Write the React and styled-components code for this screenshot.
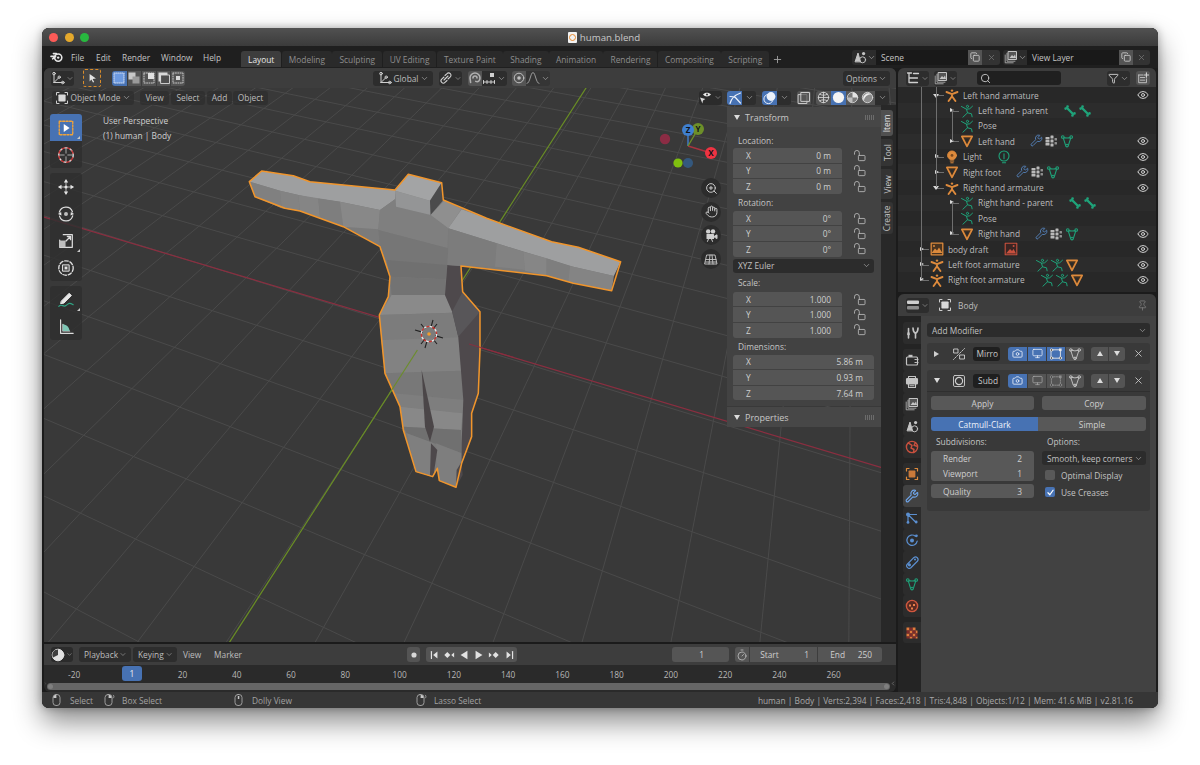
import React from "react";
import styled, { createGlobalStyle } from "styled-components";
import {
  ChevronDown, ChevronLeft, ChevronRight, Eye, X, Funnel, Search, Copy, Hand, ZoomIn, Pin, Plus, Camera,
  Monitor, Timer, Wrench,
} from "lucide-react";

const GlobalStyle = createGlobalStyle`
  html, body { margin: 0; padding: 0; background: #fff; }
  body { font-family: "Open Sans", "Liberation Sans", sans-serif; font-size: 8.35px; color: #c2c2c2; white-space: nowrap; }
  * { box-sizing: border-box; }
`;

const BLUE = "#4772b3";

/* ---------- small drawings ---------- */

const Svg = styled.svg`
  flex: none;
  display: block;
  color: ${(p) => p.$c || "#c8c8c8"};
`;

const Ico = ({ s = 14, c, children, w = 1 }) => (
  <Svg $c={c} width={s} height={s} viewBox="0 0 14 14" fill="none" stroke="currentColor"
    strokeWidth={w} strokeLinecap="round" strokeLinejoin="round">
    {children}
  </Svg>
);

const ORANGE = "#dd8a3c";
const GREEN = "#1fa37a";
const SKY = "#5b8fd0";

const Armature = () => (
  <Ico c={ORANGE} w={1.9}>
    <circle cx="7" cy="2.6" r="1.2" fill="currentColor" stroke="none" />
    <path d="M1.5 4 7 6.2 12.5 4M7 6.2v2M7 8.2 3.6 13M7 8.2l3.4 4.8" />
  </Ico>
);
const Pose = () => (
  <Ico c={GREEN} w={1}>
    <circle cx="7.5" cy="2.4" r="1.1" />
    <path d="M1.5 2.5 6.5 5.2l3.2-.4 2.8-2.6M6.5 5.2l1 3.6-4.6 4.4M7.5 8.8l4 1 .6 3" />
  </Ico>
);
const MeshObj = () => (
  <Ico c={ORANGE} w={1.7}>
    <path d="M1.8 2.4h10.4L7 12.4z" fill="#4a3420" />
    <path d="M4.8 4.6h4.4L7 9z" fill="#2a2a2a" stroke="none" />
  </Ico>
);
const MeshData = () => (
  <Ico c={GREEN} w={1.1}>
    <path d="M3 3.2q4 1.6 8 0L8.4 11.4H5.6z" />
    <circle cx="2.8" cy="3" r="1.3" fill="#2a2a2a" />
    <circle cx="11.2" cy="3" r="1.3" fill="#2a2a2a" />
    <circle cx="7" cy="11.6" r="1.3" fill="#2a2a2a" />
  </Ico>
);
const Bone = () => (
  <Ico c={GREEN} w={2.4}>
    <path d="M4 4l6 6" />
    <path d="M2.6 4.6v-.1M4.6 2.5h-.1M9.5 11.5h-.1M11.5 9.5v-.1" strokeWidth="2.6" />
  </Ico>
);
const WrenchBlue = () => <Wrench size={13} color={SKY} strokeWidth={1.5} />;
const Mods = () => (
  <Ico c="#b9b9b9" w={0}>
    <g fill="currentColor" stroke="none">
      <rect x="1.5" y="3" width="4" height="2.4" rx=".5" />
      <rect x="1.5" y="6" width="4" height="2.4" rx=".5" />
      <rect x="1.5" y="9" width="4" height="2.4" rx=".5" />
      <rect x="6.5" y="1.5" width="3" height="3" rx=".5" />
      <rect x="6.5" y="5.5" width="3" height="3" rx=".5" />
      <rect x="6.5" y="9.5" width="3" height="3" rx=".5" />
      <rect x="10.5" y="4" width="2.5" height="2.4" rx=".5" opacity=".7" />
      <rect x="10.5" y="8" width="2.5" height="2.4" rx=".5" opacity=".7" />
    </g>
  </Ico>
);
const Bulb = () => (
  <Ico c={ORANGE} w={1}>
    <circle cx="7" cy="5.4" r="4.4" fill="currentColor" />
    <circle cx="7" cy="5.4" r="1.4" fill="#7a4a20" stroke="none" />
    <path d="M5.2 11h3.6M5.8 12.8h2.4" />
  </Ico>
);
const LightData = () => (
  <Ico c={GREEN} w={1.1}>
    <circle cx="7" cy="6" r="5" />
    <path d="M7 3.8v5M5.4 12.8h3.2" />
  </Ico>
);
const ImageObj = () => (
  <Ico c={ORANGE} w={1.3}>
    <rect x="1.2" y="1.2" width="11.6" height="11.6" fill="#4a3420" />
    <path d="M1.5 11 5 6.5 7 8.5 9 5.5l3.4 5.5z" fill="currentColor" stroke="none" />
    <circle cx="4" cy="4" r="1" fill="currentColor" stroke="none" />
  </Ico>
);
const Picture = () => (
  <Ico c="#c8503e" w={1.1}>
    <rect x="1.2" y="1.2" width="11.6" height="11.6" fill="#3a2523" />
    <path d="M2 11.5 6 7l2 2 1.6-2 2.4 4.5z" fill="currentColor" stroke="none" />
    <circle cx="9.6" cy="4" r="1" fill="currentColor" stroke="none" />
  </Ico>
);
const Lock = () => (
  <Ico c="#b4b4b4" w={0.9}>
    <path d="M1.5 5.6V4.2a2.4 2.4 0 0 1 4.8 0v2.6" />
    <rect x="5.4" y="6.8" width="6.6" height="5.2" rx=".8" />
  </Ico>
);
const OutlinerIcon = () => (
  <Ico c="#cfcfcf" w={1.3}>
    <path d="M1.5 2h4M3 2v9.5M3 7h8.5M3 11.5h8.5M7.5 2.5h5" />
  </Ico>
);
const LayerIcon = () => (
  <Ico c="#c4c4c4" w={1}>
    <rect x="4.5" y="1.5" width="8" height="8" fill="#555" />
    <path d="M5.5 8 8 5l1.5 1.5L11 4.5 12 8z" fill="currentColor" stroke="none" />
    <path d="M3 3.2v8h8M1.2 5v7.8h8" opacity=".75" />
  </Ico>
);
const SceneIcon = () => (
  <Ico c="#c4c4c4" w={1}>
    <path d="M2.2 11.5 5 3l2.4 8.5z" fill="currentColor" />
    <circle cx="10.6" cy="3.6" r="1.6" fill="currentColor" stroke="none" />
    <circle cx="9.6" cy="9.8" r="3" />
  </Ico>
);
const ObjectSquare = () => (
  <Ico c="#cfcfcf" w={1}>
    <path d="M1.5 4V1.5H4M10 1.5h2.5V4M12.5 10v2.5H10M4 12.5H1.5V10" />
    <rect x="3.4" y="3.4" width="7.2" height="7.2" rx=".8" fill="#d8d8d8" stroke="none" />
  </Ico>
);
const TimelineIcon = () => (
  <Ico c="#e0e0e0" w={1}>
    <circle cx="7" cy="7" r="5.8" fill="currentColor" />
    <path d="M7 7V1.4A5.6 5.6 0 0 0 2 9.6z" fill="#3d3d3d" stroke="none" />
  </Ico>
);
const BlenderLogo = () => (
  <Ico c="#e6e6e6" w={1.6}>
    <circle cx="8.2" cy="7.6" r="3.6" />
    <circle cx="8.2" cy="7.6" r="1.2" fill="currentColor" stroke="none" />
    <path d="M1 6.4h4.6M2.6 8.8 5.4 6.6M6.4 3.6H3.4" />
  </Ico>
);
const Arrow = () => (
  <Ico c="#e4e4e4" w={0}>
    <path d="M4.6 3 11 7.4 7.6 8l1.6 3-1.2.5L6.4 8.6 4.6 10.4z" fill="currentColor" stroke="none" />
  </Ico>
);
const SelectMode = ({ kind }) => (
  <Ico c="#d6d6d6" w={0.9}>
    {kind === 0 && <rect x="2" y="2" width="10" height="10" fill="#6d9ae0" stroke="#e0e8f6" strokeDasharray="1 1" />}
    {kind === 1 && (<><rect x="1.5" y="1.5" width="7" height="7" fill="#c8c8c8" stroke="none" /><rect x="5.5" y="5.5" width="7" height="7" fill="#9a9a9a" stroke="none" /></>)}
    {kind === 2 && (<><rect x="2" y="2" width="10" height="10" strokeDasharray="1 1.4" /><rect x="6" y="2" width="6" height="6" fill="#e0e0e0" stroke="none" /></>)}
    {kind === 3 && (<><rect x="1.5" y="1.5" width="9" height="9" fill="#d8d8d8" stroke="none" /><rect x="4" y="4" width="8.5" height="8.5" fill="#4e4e4e" stroke="#d8d8d8" /></>)}
    {kind === 4 && (<><rect x="2" y="2" width="10" height="10" strokeDasharray="1 1.4" /><rect x="5" y="5" width="4" height="4" fill="#d8d8d8" stroke="none" /></>)}
  </Ico>
);
const Transform3D = () => (
  <Ico c="#d0d0d0" w={1}>
    <path d="M3 11.5V3M3 11.5h8.5M3 11.5l5-5" />
    <circle cx="3" cy="2.6" r="1.3" />
    <circle cx="11.8" cy="11.5" r="1.3" />
    <circle cx="8.2" cy="6.2" r="1.2" />
  </Ico>
);
const Link = () => (
  <Ico c="#d0d0d0" w={1.1}>
    <path d="M6 4.5 8 2.6a2.3 2.3 0 0 1 3.3 3.3L9 8M8 9.5 6 11.4a2.3 2.3 0 0 1-3.3-3.3L5 6M5 9l4-4" />
  </Ico>
);
const Magnet = () => (
  <Ico c="#b0b0b0" w={1.6}>
    <path d="M2.6 11.5 2 7a5 5 0 0 1 10 0c0 3-2 4.5-4.2 3.4M5 7a2 2 0 0 1 4 0" />
  </Ico>
);
const SnapIcon = () => (
  <Ico c="#d0d0d0" w={1}>
    <path d="M1.5 9.5v3M12.5 9.5v3M1.5 11h11M5 9.5v3M9 9.5v3" />
    <rect x="8" y="2" width="4" height="4" fill="currentColor" stroke="none" />
  </Ico>
);
const PropEdit = () => (
  <Ico c="#c0c0c0" w={1}>
    <circle cx="7" cy="7" r="4.8" />
    <circle cx="7" cy="7" r="1.8" fill="currentColor" stroke="none" />
  </Ico>
);
const Falloff = () => (
  <Ico c="#9a9a9a" w={1}>
    <path d="M1 12.5c3 0 3.6-11 6-11s3 11 6 11" />
  </Ico>
);
const GizmoToggle = () => (
  <Ico c="#eaf0fa" w={1.2}>
    <path d="M2 12.5C3 8 6 4.5 12.5 2M7.4 6.5l5 5.5M2 5.5c2 0 4 .4 5.4 1" />
  </Ico>
);
const OverlayToggle = () => (
  <Ico c="#eaf0fa" w={1}>
    <circle cx="5.5" cy="8" r="4.6" />
    <circle cx="8" cy="5.5" r="4.4" fill="#eaf0fa" stroke="none" />
  </Ico>
);
const EyeCursor = () => (
  <Ico c="#d8d8d8" w={1}>
    <path d="M4 3.6c2-2.6 5.8-2.6 8 0-2.2 2.6-6 2.6-8 0z" fill="#e8e8e8" stroke="none" />
    <circle cx="8" cy="3.6" r="1" fill="#333" stroke="none" />
    <path d="M1 6.4 6.4 8 4 9.4l-.6 3z" fill="currentColor" stroke="none" />
  </Ico>
);
const XRay = () => (
  <Ico c="#c8c8c8" w={1}>
    <rect x="1.5" y="3.6" width="8.4" height="8.9" />
    <rect x="4.2" y="1.5" width="8.3" height="8.9" fill="#555" fillOpacity=".7" />
  </Ico>
);
const Shade = ({ kind }) => (
  <Ico c="#d8d8d8" w={0.9} s={13}>
    {kind === 0 && (<><circle cx="7" cy="7" r="5.6" /><path d="M1.4 7h11.2M7 1.4v11.2M3 3.4c2.4 1.6 5.6 1.6 8 0M3 10.6c2.4-1.6 5.6-1.6 8 0" /></>)}
    {kind === 1 && <circle cx="7" cy="7" r="6" fill="#f4f4f4" stroke="none" />}
    {kind === 2 && (<><circle cx="7" cy="7" r="5.6" fill="#7a7a7a" /><path d="M7 1.4A5.6 5.6 0 0 1 12.6 7H7z" fill="#e4e4e4" stroke="none" /><path d="M7 7v5.6A5.6 5.6 0 0 1 1.4 7z" fill="#bdbdbd" stroke="none" /></>)}
    {kind === 3 && (<><circle cx="7" cy="7" r="5.6" fill="#8c8c8c" /><path d="M3 10.6A5.6 5.6 0 0 1 11 3.4 8 8 0 0 0 3 10.6z" fill="#eee" stroke="none" /></>)}
  </Ico>
);
const FilmCamera = () => (
  <Ico c="#d0d0d0" w={1}>
    <circle cx="4.2" cy="3.4" r="2.2" fill="currentColor" stroke="none" />
    <circle cx="9" cy="3.4" r="2.2" fill="currentColor" stroke="none" />
    <rect x="2.5" y="6" width="7.5" height="5" rx=".6" fill="currentColor" stroke="none" />
    <path d="M10 8.5l3-1.7v3.4zM4.5 11l-1 2.4M7.5 11l1 2.4" fill="currentColor" />
  </Ico>
);

/* tool shelf drawings */
const ToolIcon = ({ children }) => (
  <Svg $c="#dcdcdc" width="18" height="18" viewBox="0 0 20 20" fill="none" stroke="currentColor"
    strokeWidth="1.1" strokeLinecap="round" strokeLinejoin="round">
    {children}
  </Svg>
);
const ToolSelect = () => (
  <ToolIcon>
    <rect x="2.5" y="2.5" width="15" height="15" stroke="#f0a33a" strokeWidth="1.5" strokeDasharray="2.2 1.6" />
    <path d="M7.5 5.5 14 10l-6.5 4.5z" fill="#fff" stroke="none" />
  </ToolIcon>
);
const ToolCursor = () => (
  <ToolIcon>
    <circle cx="10" cy="10" r="8" strokeWidth="1.5" stroke="#e0e0e0" strokeDasharray="3 3" />
    <circle cx="10" cy="10" r="8" strokeWidth="1.5" stroke="#c93a3a" strokeDasharray="3 3" strokeDashoffset="3" />
    <path d="M10 3v5M10 12v5M3 10h5M12 10h5" stroke="#aaa" />
  </ToolIcon>
);
const ToolMove = () => (
  <ToolIcon>
    <path d="M10 3.2v13.6M3.2 10h13.6" strokeWidth=".9" />
    <g fill="#e4e4e4" stroke="none">
      <path d="M10 1 12.4 5H7.6zM10 19l2.4-4H7.6zM1 10l4-2.4v4.8zM19 10l-4-2.4v4.8z" />
      <circle cx="10" cy="10" r="1.7" />
    </g>
  </ToolIcon>
);
const ToolRotate = () => (
  <ToolIcon>
    <path d="M2.6 8a7.6 7.6 0 0 1 14.6-.4M17.4 12a7.6 7.6 0 0 1-14.6.4" strokeWidth="1.4" />
    <path d="M1 10l3.6-2.2.4 4zM19 10l-3.6-2.2-.4 4z" fill="#e4e4e4" stroke="none" />
    <circle cx="10" cy="10" r="2.2" fill="#bdbdbd" stroke="none" />
  </ToolIcon>
);
const ToolScale = () => (
  <ToolIcon>
    <path d="M7 3h10v14H3V9" strokeWidth="1.4" />
    <rect x="2.5" y="9.5" width="7" height="7.5" fill="#bdbdbd" stroke="none" />
    <path d="M10 10l5-5M11.5 5H15v3.5" strokeWidth="1.4" />
  </ToolIcon>
);
const ToolTransform = () => (
  <ToolIcon>
    <circle cx="10" cy="10" r="8" strokeWidth="1.5" strokeDasharray="4 2" />
    <rect x="6.5" y="6.5" width="7" height="7" fill="#4b4b4b" stroke="#e4e4e4" />
    <rect x="8.5" y="8.5" width="3" height="3" fill="#e4e4e4" stroke="none" />
  </ToolIcon>
);
const ToolAnnotate = () => (
  <ToolIcon>
    <path d="M5 11 13.5 2.5l2.5 2.5L7.6 13.5 4.4 14z" fill="#e8e8e8" stroke="#e8e8e8" />
    <path d="M2 17c3-3.4 5 1.4 8-.8s3-3.6 8-1" stroke="#2fa584" strokeWidth="1.3" />
  </ToolIcon>
);
const ToolMeasure = () => (
  <ToolIcon>
    <path d="M4 2v15h14M6.6 7v7.4H14" strokeWidth="1.3" />
    <path d="M6.6 7c4 .3 7 3.5 7.4 7.4H6.6z" fill="#7fc6b5" stroke="none" />
  </ToolIcon>
);

/* properties editor tabs */
const TabDraw = {
  tool: () => (
    <Ico c="#c4c4c4" w={1.6}>
      <path d="M3.5 2.5v4M3.5 8.5v3.5M10.5 7.5V12M8 2c0 3 1 4.5 2.5 5.5C12 6.5 13 5 13 2" />
      <rect x="2.2" y="6.5" width="2.6" height="2.6" fill="currentColor" stroke="none" />
    </Ico>
  ),
  render: () => (
    <Ico c="#c4c4c4" w={1.2}>
      <rect x="1.5" y="4" width="11" height="8" rx="1" />
      <rect x="3.5" y="1.8" width="4" height="2.2" fill="currentColor" stroke="none" />
      <path d="M10 6.5h3M10 9.5h3" strokeDasharray="1 1" />
    </Ico>
  ),
  output: () => (
    <Ico c="#c4c4c4" w={1.1}>
      <rect x="1.5" y="3.5" width="11" height="5.5" rx=".8" fill="currentColor" />
      <path d="M3.5 3.2V1.5h7v1.7M3.5 9v3.5h7V9" />
      <path d="M5 10.8h4" />
    </Ico>
  ),
  layer: LayerIcon,
  scene: SceneIcon,
  world: () => (
    <Ico c="#c8503e" w={1.4}>
      <circle cx="7" cy="7" r="5.6" />
      <path d="M3.5 3.2 7 5.4 6 8 9 9.5l-.6 3M10.4 2.6 9 5.4l3 .8" />
    </Ico>
  ),
  object: () => (
    <Ico c={ORANGE} w={1.2}>
      <path d="M1.5 4V1.5H4M10 1.5h2.5V4M12.5 10v2.5H10M4 12.5H1.5V10" />
      <rect x="3.6" y="3.6" width="6.8" height="6.8" rx=".6" fill="#c9793a" stroke="none" />
    </Ico>
  ),
  modifier: () => <Wrench size={14} color="#6ea3e6" strokeWidth={2} />,
  particles: () => (
    <Ico c={SKY} w={1.2}>
      <path d="M3 3.5v8M3 3.5l8.5 0M3 3.5l8 8" />
      <circle cx="3" cy="3.4" r="2" fill="currentColor" stroke="none" />
      <circle cx="11.2" cy="11" r="1.4" fill="currentColor" stroke="none" />
      <circle cx="3" cy="11.4" r="1.4" fill="currentColor" stroke="none" />
    </Ico>
  ),
  physics: () => (
    <Ico c={SKY} w={1.2}>
      <path d="M10.4 3.2a5.2 5.2 0 1 0 1.8 5" />
      <circle cx="7" cy="7.4" r="2" fill="currentColor" stroke="none" />
      <circle cx="11.4" cy="2.8" r="1.4" fill="currentColor" stroke="none" />
    </Ico>
  ),
  constraint: () => (
    <Ico c={SKY} w={1.2}>
      <path d="M2 9.5 9 2.4a2.6 2.6 0 0 1 3.6 3.6l-7 7a2.6 2.6 0 0 1-3.6-3.5z" />
      <circle cx="4.4" cy="9.8" r="1.6" fill="currentColor" stroke="none" />
      <circle cx="10" cy="4.4" r="1" fill="currentColor" stroke="none" />
    </Ico>
  ),
  data: () => <MeshData />,
  material: () => (
    <Ico c="#d0573e" w={1.4}>
      <circle cx="7" cy="7" r="5.6" fill="#5a2a22" />
      <path d="M4 5.5h2v2H4zM8 5h2v2H8zM6 8.5h2v2H6z" fill="#e8804a" stroke="none" />
    </Ico>
  ),
  texture: () => (
    <Ico c="#d0573e" w={0}>
      <path d="M1.5 1.5h3v3h-3zM7.5 1.5h3v3h-3zM4.5 4.5h3v3h-3zM10.5 4.5h2v3h-2zM1.5 7.5h3v3h-3zM7.5 7.5h3v3h-3zM4.5 10.5h3v2h-3zM10.5 10.5h2v2h-2z" fill="#e07a3c" stroke="none" />
      <path d="M4.5 1.5h3v3h-3zM1.5 4.5h3v3h-3zM7.5 4.5h3v3h-3zM4.5 7.5h3v3h-3zM10.5 7.5h2v3h-2zM1.5 10.5h3v2h-3zM7.5 10.5h3v2h-3z" fill="#7d2a2a" stroke="none" />
    </Ico>
  ),
};

const Mirror = () => (
  <Ico c="#cfcfcf" w={0.9}>
    <path d="M12.5 1.5 1.5 12.5" strokeDasharray="1.2 1.2" />
    <rect x="2" y="2" width="4" height="4" />
    <rect x="8" y="8" width="4.5" height="4" />
  </Ico>
);
const Subd = () => (
  <Ico c="#cfcfcf" w={0.9}>
    <rect x="1.5" y="1.5" width="11" height="11" rx="1.4" />
    <circle cx="7" cy="7" r="3.6" strokeWidth="1.2" />
  </Ico>
);
const EditCage = ({ on }) => (
  <Ico c={on ? "#e8e8e8" : "#8f8f8f"} w={0.9}>
    <rect x="2.4" y="2.8" width="9" height="8.4" strokeDasharray={on ? undefined : "1.4 1"} />
    <circle cx="2.6" cy="3" r="1.2" fill="#333" />
    <rect x="10" y="1.5" width="2.6" height="2.6" fill="currentColor" stroke="none" />
    <circle cx="2.6" cy="11" r="1.2" fill="#333" />
    <circle cx="11.4" cy="11" r="1.2" fill="#333" />
  </Ico>
);
const Cage = () => (
  <Ico c="#bdbdbd" w={1}>
    <path d="M3 3.2q4 1.4 8 0L8.4 11H5.6z" />
    <circle cx="2.8" cy="3" r="1.3" />
    <circle cx="11.2" cy="3" r="1.3" />
    <circle cx="7" cy="11.4" r="1.3" />
  </Ico>
);
const Mouse = ({ side }) => (
  <Ico c="#a8a8a8" w={0.9}>
    <rect x="3" y="1.5" width="7" height="11" rx="3" />
    {side === "left" && <path d="M3.4 5V4a3 3 0 0 1 3-2.3V5z" fill="#c8c8c8" stroke="none" />}
    {side === "middle" && <rect x="5.8" y="3" width="1.5" height="3" fill="#c8c8c8" stroke="none" />}
    {side === "right" && <path d="M9.6 5V4a3 3 0 0 0-3-2.3V5z" fill="#c8c8c8" stroke="none" />}
    {side === "right" && <path d="M11.4 2.2c.8.8.8 2 0 2.8" />}
  </Ico>
);
const Transport = ({ kind }) => {
  const shapes = {
    first: <><path d="M4 3v8" strokeWidth="1.4" /><path d="M11 3v8L6 7z" fill="currentColor" stroke="none" /></>,
    prevKey: <><path d="M5 3.5 8.5 7 5 10.5 1.5 7z" fill="currentColor" stroke="none" /><path d="M13 4v6L9.6 7z" fill="currentColor" stroke="none" /></>,
    back: <path d="M11 2v10L3 7z" fill="currentColor" stroke="none" />,
    play: <path d="M3 2v10l8-5z" fill="currentColor" stroke="none" />,
    nextKey: <><path d="M9 3.5 12.5 7 9 10.5 5.5 7z" fill="currentColor" stroke="none" /><path d="M1 4v6l3.4-3z" fill="currentColor" stroke="none" /></>,
    last: <><path d="M10 3v8" strokeWidth="1.4" /><path d="M3 3v8l5-4z" fill="currentColor" stroke="none" /></>,
  };
  return <Ico c="#e2e2e2" w={1} s={12}>{shapes[kind]}</Ico>;
};

/* ---------- window frame ---------- */

const Page = styled.main`
  min-height: 765px;
  padding: 28px 42px 0;
  overflow: hidden;
`;
const Frame = styled.div`
  width: 1116px;
  height: 680px;
  border-radius: 7px;
  background: #202020;
  box-shadow: 0 14px 28px rgba(0, 0, 0, 0.45), 0 0 8px rgba(0, 0, 0, 0.3);
`;
const Win = styled.div`
  width: 100%;
  height: 100%;
  display: flex;
  flex-direction: column;
  background: #202020;
  border-radius: 7px;
  overflow: hidden;
`;
const TitleBar = styled.div`
  position: relative;
  height: 18px;
  flex: none;
  display: flex;
  align-items: center;
  justify-content: center;
  gap: 3px;
  padding-left: 8px;
  background: linear-gradient(#515151, #3b3b3b);
  color: #c8c8c8;
  font-size: 9.7px;
`;
const Lights = styled.div`
  position: absolute;
  left: 7px;
  top: 5px;
  display: flex;
  gap: 6.5px;
`;
const Light = styled.span`
  width: 9px;
  height: 9px;
  border-radius: 50%;
  background: ${(p) => p.$c};
`;
const DocIcon = styled.span`
  width: 9px;
  height: 11px;
  background: #f2f2f2;
  border-radius: 1px;
  display: flex;
  align-items: center;
  justify-content: center;
  &::after {
    content: "";
    width: 5px;
    height: 5px;
    border-radius: 50%;
    border: 1.5px solid #e8892e;
  }
`;

const TopBar = styled.div`
  height: 22px;
  flex: none;
  display: flex;
  align-items: center;
  padding: 0 8px;
  background: #1f1f1f;
`;
const TopMenu = styled.span`
  width: ${(p) => p.$w}px;
  color: #c4c4c4;
  flex: none;
`;
const Tabs = styled.div`
  display: flex;
  align-self: flex-end;
  padding-bottom: 1px;
`;
const WorkTab = styled.div`
  height: 16px;
  padding: 0 7.05px;
  display: flex;
  align-items: center;
  border-radius: 3px 3px 0 0;
  background: ${(p) => (p.$on ? "#3d3d3d" : "#2a2a2a")};
  color: ${(p) => (p.$on ? "#e8e8e8" : "#8e8e8e")};
  margin-right: 0.4px;
`;
const AddTab = styled.div`
  width: 16px;
  display: flex;
  align-items: center;
  justify-content: center;
  color: #a0a0a0;
`;
const SceneBox = styled.div`
  display: flex;
  height: 15px;
  margin-left: ${(p) => p.$ml || "0"};
`;
const SceneDrop = styled.div`
  width: 24px;
  display: flex;
  align-items: center;
  justify-content: center;
  background: #2c2c2c;
  border-radius: 3px 0 0 3px;
  color: #bbb;
`;
const SceneField = styled.div`
  width: 92px;
  display: flex;
  align-items: center;
  padding-left: 5px;
  background: #191919;
  color: #c4c4c4;
`;
const SceneBtn = styled.div`
  width: ${(p) => p.$w}px;
  display: flex;
  align-items: center;
  justify-content: center;
  background: ${(p) => (p.$light ? "#545454" : "#333")};
  border-radius: ${(p) => (p.$light ? "0" : "0 3px 3px 0")};
`;

const Work = styled.div`
  flex: 1;
  display: flex;
  gap: 2px;
  padding: 0 2px;
  min-height: 0;
  background: #1b1b1b;
`;
const LeftCol = styled.div`
  width: 852px;
  display: flex;
  flex-direction: column;
  gap: 2px;
`;
const RightCol = styled.div`
  width: 258px;
  display: flex;
  flex-direction: column;
  gap: 2px;
`;

/* ---------- shared header widgets ---------- */

const Bar = styled.div`
  display: flex;
  align-items: center;
  height: ${(p) => p.$h || 20}px;
  padding-left: ${(p) => p.$pl || 7}px;
  flex: none;
  background: ${(p) => p.$bg || "#3d3d3d"};
  position: relative;
`;
const Drop = styled.div`
  width: ${(p) => p.$w}px;
  height: 15px;
  margin-left: ${(p) => p.$ml || 0}px;
  display: flex;
  align-items: center;
  justify-content: ${(p) => (p.$left ? "space-between" : "center")};
  gap: 1px;
  padding: ${(p) => (p.$left ? "0 4px 0 5px" : "0")};
  border-radius: 3px;
  background: ${(p) => p.$bg || "#2d2d2d"};
  color: #bdbdbd;
  flex: none;
  ${(p) => p.$end && "margin-left: auto; margin-right: 6px;"}
`;
const Seg = styled.div`
  display: flex;
  height: ${(p) => p.$h || 15}px;
  margin-left: ${(p) => p.$ml || 0}px;
  border-radius: 3px;
  overflow: hidden;
  flex: none;
`;
const SegBtn = styled.div`
  width: ${(p) => p.$w || 15}px;
  display: flex;
  align-items: center;
  justify-content: center;
  gap: 1px;
  background: ${(p) => (p.$on ? BLUE : p.$bg || "#545454")};
  border-left: ${(p) => (p.$sep ? "1px solid #3d3d3d" : "0")};
`;
const Chev = ({ s = 9, c = "#b8b8b8" }) => <ChevronDown size={s} color={c} strokeWidth={1.6} />;

/* ---------- 3D viewport ---------- */

const Viewport = styled.section`
  position: relative;
  height: 574px;
  flex: none;
  background: #393939;
  border-radius: 6px 6px 0 0;
  overflow: hidden;
  display: flex;
  flex-direction: column;
`;
const Scene3D = styled.svg`
  position: absolute;
  left: 0;
  top: 0;
  width: 852px;
  height: 574px;
`;
const CursorTool = styled.div`
  width: 18px;
  height: 18px;
  margin-left: 9px;
  display: flex;
  align-items: center;
  justify-content: center;
  background: #444;
  border: 1.5px dashed #d98c2a;
  border-radius: 2px;
`;
const ModeRow = styled.div`
  position: relative;
  height: 19px;
  flex: none;
  display: flex;
  align-items: center;
  padding-left: 8px;
`;
const ModeItem = styled.div`
  width: ${(p) => p.$w}px;
  height: 14px;
  margin-left: ${(p) => p.$ml || 0}px;
  display: flex;
  align-items: center;
  justify-content: center;
  background: rgba(46, 46, 46, 0.75);
  border-radius: 3px;
  color: #bdbdbd;
`;
const ModeDrop = styled(ModeItem)`
  justify-content: space-between;
  padding: 0 3px;
`;
const RightTools = styled.div`
  margin-left: auto;
  margin-right: 7px;
  display: flex;
  align-items: center;
`;
const ViewBody = styled.div`
  position: relative;
  flex: 1;
  display: flex;
  min-height: 0;
`;
const Shelf = styled.div`
  margin: 7px 0 0 6px;
  width: 32px;
  display: flex;
  flex-direction: column;
  gap: 5px;
`;
const ShelfGroup = styled.div`
  display: flex;
  flex-direction: column;
  border-radius: 3px;
  overflow: hidden;
`;
const ShelfBtn = styled.div`
  position: relative;
  height: 27px;
  display: flex;
  align-items: center;
  justify-content: center;
  background: ${(p) => (p.$on ? BLUE : "rgba(46, 46, 46, 0.8)")};
  ${(p) =>
    p.$more &&
    `&::after {
      content: "";
      position: absolute;
      right: 2px;
      bottom: 2px;
      border-left: 3px solid transparent;
      border-bottom: 3px solid #c8c8c8;
    }`}
`;
const Hud = styled.div`
  margin: 6px 0 0 21px;
  color: #d0d0d0;
  line-height: 15px;
`;
const NavCol = styled.div`
  margin-left: auto;
  width: 70px;
  padding-top: 13px;
  display: flex;
  flex-direction: column;
`;
const GizmoSvg = styled.svg`
  width: 70px;
  height: 58px;
  flex: none;
`;
const NavBtn = styled.div`
  width: 20px;
  height: 20px;
  margin: 0 0 3.5px 46px;
  border-radius: 50%;
  display: flex;
  align-items: center;
  justify-content: center;
  background: #2c2c2c;
`;

const Side = styled.div`
  width: 169px;
  margin-left: 2px;
  display: flex;
  flex: none;
`;
const SidePanels = styled.div`
  width: 154px;
`;
const PanelHead = styled.div`
  height: 20px;
  display: flex;
  align-items: center;
  gap: 5px;
  padding: 0 6px 0 7px;
  background: #474747;
  color: #c8c8c8;
  font-size: 9px;
  margin-top: ${(p) => p.$mt || 0}px;
`;
const Tri = styled.span`
  width: 0;
  height: 0;
  border-left: 3px solid transparent;
  border-right: 3px solid transparent;
  border-top: 5px solid #dcdcdc;
  transform: ${(p) => (p.$up ? "rotate(180deg)" : "none")};
`;
const Grip = styled.span`
  margin-left: auto;
  width: 10px;
  height: 5px;
  background: repeating-linear-gradient(90deg, #6c6c6c 0 1px, transparent 1px 2px);
`;
const PanelBody = styled.div`
  background: #424242;
  padding: 6px 7px 6px 6px;
`;
const Caption = styled.div`
  height: ${(p) => p.$h}px;
  padding-left: 5px;
  display: flex;
  align-items: center;
  color: #c4c4c4;
`;
const XformRow = styled.div`
  display: grid;
  grid-template-columns: ${(p) => (p.$wide ? "1fr" : "109px 1fr")};
`;
const Fields = styled.div`
  border-radius: 3px;
  overflow: hidden;
  display: flex;
  flex-direction: column;
  gap: 1px;
`;
const FieldRow = styled.div`
  height: ${(p) => p.$h || 14.6}px;
  display: flex;
  justify-content: space-between;
  align-items: center;
  padding: 0 11px 0 13px;
  background: #555;
  color: #cfcfcf;
`;
const Locks = styled.div`
  display: flex;
  flex-direction: column;
  align-items: center;
  padding-left: 3px;
  & > * {
    height: 15.3px;
  }
`;
const SideSelect = styled.div`
  height: 14px;
  margin-top: 2px;
  display: flex;
  align-items: center;
  justify-content: space-between;
  padding: 0 3px 0 5px;
  border-radius: 3px;
  background: #2c2c2c;
  color: #c0c0c0;
`;
const SideTabs = styled.div`
  width: 15px;
  padding: 5px 0 0;
  background: #282828;
  display: flex;
  flex-direction: column;
  gap: 3px;
  margin-top: -2px;
`;
const SideTab = styled.div`
  width: 12px;
  height: ${(p) => p.$h}px;
  display: flex;
  align-items: center;
  justify-content: center;
  background: ${(p) => (p.$on ? "#505050" : "#343434")};
  border-radius: 0 3px 3px 0;
  color: ${(p) => (p.$on ? "#e4e4e4" : "#c4c4c4")};
  & > span {
    transform: rotate(-90deg);
  }
`;

/* ---------- outliner ---------- */

const Outliner = styled.section`
  height: 224px;
  flex: none;
  border-radius: 6px 6px 0 0;
  overflow: hidden;
  background: #282828;
  display: flex;
  flex-direction: column;
`;
const SearchBox = styled.div`
  width: 84px;
  height: 14px;
  margin-left: 20px;
  padding-left: 3px;
  display: flex;
  align-items: center;
  border-radius: 3px;
  background: #202020;
`;
const Tree = styled.div`
  position: relative;
  flex: 1;
  margin-top: -0.6px;
`;
const TreeRow = styled.div`
  height: 15.42px;
  display: flex;
  align-items: center;
  padding-left: ${(p) => 2 + p.$level * 15}px;
  padding-right: 6px;
  color: #bcbcbc;
  background: ${(p) => (p.$odd ? "#2c2c2c" : "#282828")};
`;
const TreeLine = styled.span`
  position: absolute;
  left: ${(p) => p.$x}px;
  top: ${(p) => p.$y}px;
  height: ${(p) => p.$h}px;
  width: 1px;
  background: #6f6f6f;
`;
const Expander = styled.span`
  position: relative;
  width: 15px;
  height: 10px;
  flex: none;
  &::before {
    content: "";
    position: absolute;
    left: 6px;
    top: 5px;
    width: 8px;
    height: 1px;
    background: ${(p) => (p.$kind ? "#6f6f6f" : "transparent")};
  }
  &::after {
    content: "";
    position: absolute;
    left: ${(p) => (p.$kind === "down" ? 3 : 5)}px;
    top: ${(p) => (p.$kind === "down" ? 3.5 : 2.5)}px;
    border: 2.5px solid transparent;
    ${(p) => p.$kind === "right" && "border-left: 4px solid #d8d8d8; border-right-width: 0;"}
    ${(p) => p.$kind === "down" && "border-top: 4px solid #d8d8d8; border-bottom-width: 0; border-left-width: 3px; border-right-width: 3px;"}
  }
`;
const RowLabel = styled.span`
  margin-left: 4px;
`;
const Extras = styled.span`
  display: flex;
  gap: 1.4px;
  margin-left: 15px;
`;
const EyeSlot = styled.span`
  margin-left: auto;
  width: 14px;
  display: flex;
  justify-content: center;
`;

/* ---------- properties ---------- */

const Properties = styled.section`
  flex: 1;
  min-height: 0;
  border-radius: 6px 6px 0 0;
  overflow: hidden;
  background: #242424;
  display: flex;
  flex-direction: column;
`;
const ObjectGap = styled.span`
  margin-left: 9px;
  display: flex;
`;
const PinSlot = styled.span`
  margin-left: auto;
  margin-right: 8px;
  display: flex;
`;
const PropMain = styled.div`
  flex: 1;
  display: flex;
  min-height: 0;
`;
const PropTabs = styled.div`
  width: 23px;
  flex: none;
  padding-top: 6px;
  display: flex;
  flex-direction: column;
  gap: 5px;
  align-items: flex-end;
`;
const PropTabGroup = styled.div`
  width: 18px;
  display: flex;
  flex-direction: column;
`;
const PropTab = styled.div`
  height: 21.9px;
  padding-left: 2px;
  display: flex;
  align-items: center;
  background: ${(p) => (p.$on ? "#424242" : "#2c2c2c")};
  border-radius: 3px 0 0 3px;
`;
const PropBody = styled.div`
  flex: 1;
  background: #424242;
  padding: 7px 6px 0;
`;
const WideSelect = styled.div`
  height: 14px;
  display: flex;
  align-items: center;
  justify-content: space-between;
  padding: 0 3px 0 5px;
  border-radius: 3px;
  background: #2c2c2c;
  color: #c0c0c0;
`;
const ModCard = styled.div`
  margin-top: ${(p) => p.$mt}px;
  background: #393939;
  border-radius: 3px;
`;
const ModHead = styled.div`
  height: 21px;
  display: flex;
  align-items: center;
  padding-left: 7px;
`;
const ModTri = styled.span`
  flex: none;
  width: 0;
  height: 0;
  ${(p) =>
    p.$open
      ? "border-left: 3px solid transparent; border-right: 3px solid transparent; border-top: 5px solid #dcdcdc;"
      : "border-top: 3px solid transparent; border-bottom: 3px solid transparent; border-left: 5px solid #cfcfcf; margin-right: 1px;"}
`;
const ModName = styled.div`
  width: 27px;
  height: 14px;
  margin-left: 7px;
  overflow: hidden;
  border-radius: 3px;
  background: #1f1f1f;
  color: #c8c8c8;
  display: flex;
  align-items: center;
  justify-content: flex-end;
  padding-right: 2px;
`;
const ModIconSlot = styled.span`
  margin-left: 12px;
  display: flex;
`;
const ModX = styled.span`
  margin-left: 8px;
  display: flex;
`;
const ModBody = styled.div`
  padding: 4px 4px 10px;
  border-top: 1px solid #2f2f2f;
`;
const TwoCol = styled.div`
  display: grid;
  grid-template-columns: 103px 104px;
  column-gap: 8px;
`;
const ActionBtn = styled.div`
  height: 14px;
  border-radius: 3px;
  display: flex;
  align-items: center;
  justify-content: center;
  background: #585858;
  color: #cfcfcf;
`;
const Switch = styled.div`
  display: grid;
  grid-template-columns: 107px 108px;
  height: 14px;
  margin-top: 7px;
  border-radius: 3px;
  overflow: hidden;
`;
const SwitchOpt = styled.div`
  display: flex;
  align-items: center;
  justify-content: center;
  background: ${(p) => (p.$on ? BLUE : "#585858")};
  color: ${(p) => (p.$on ? "#eef3fb" : "#cfcfcf")};
`;
const OptHead = styled.div`
  height: 20px;
  padding-left: 5px;
  display: flex;
  align-items: center;
  color: #c4c4c4;
`;
const SubFields = styled(Fields)`
  gap: 0.6px;
  margin-bottom: ${(p) => p.$mb || 0}px;
`;
const SubField = styled(FieldRow)`
  padding: 0 12px;
  background: #585858;
`;
const OptSelect = styled(WideSelect)`
  margin-bottom: 2px;
`;
const CheckRow = styled.div`
  height: 16px;
  margin-left: 3px;
  display: flex;
  align-items: center;
  gap: 6px;
  color: #c4c4c4;
  margin-bottom: 1px;
`;
const CheckBox = styled.span`
  width: 10px;
  height: 10px;
  border-radius: 2px;
  background: ${(p) => (p.$on ? BLUE : "#595959")};
  display: flex;
  align-items: center;
  justify-content: center;
  color: #fff;
`;

/* ---------- timeline + status ---------- */

const Timeline = styled.section`
  flex: 1;
  border-radius: 0 0 6px 6px;
  overflow: hidden;
  background: #2a2a2a;
  display: flex;
  flex-direction: column;
`;
const TextBtn = styled.span`
  margin-left: ${(p) => p.$ml}px;
  width: ${(p) => (p.$w ? `${p.$w}px` : "auto")};
  color: #bdbdbd;
  flex: none;
`;
const NumField = styled.div`
  width: ${(p) => p.$w}px;
  height: 15px;
  margin-left: ${(p) => p.$ml || 0}px;
  padding: 0 ${(p) => p.$pr ?? 8}px 0 ${(p) => p.$pl ?? 10}px;
  display: flex;
  align-items: center;
  justify-content: ${(p) => (p.$center ? "center" : "space-between")};
  background: #555;
  border-radius: ${(p) => p.$r || "3px"};
  color: #cfcfcf;
  border-right: ${(p) => (p.$sep ? "1px solid #3d3d3d" : "0")};
  flex: none;
`;
const ClockBtn = styled.div`
  width: 14px;
  height: 15px;
  margin-left: 6px;
  display: flex;
  align-items: center;
  justify-content: center;
  background: #555;
  border-radius: 3px 0 0 3px;
  flex: none;
`;
const Ruler = styled.div`
  position: relative;
  height: 18px;
  padding-left: 3px;
  display: flex;
  align-items: center;
  flex: none;
`;
const RulerTick = styled.span`
  width: 54.25px;
  flex: none;
  text-align: center;
  color: #b8b8b8;
`;
const FrameTag = styled.span`
  position: absolute;
  left: 78px;
  top: 1px;
  width: 20px;
  height: 15px;
  display: flex;
  align-items: center;
  justify-content: center;
  border-radius: 3px;
  background: ${BLUE};
  color: #f0f0f0;
`;
const ScrollRow = styled.div`
  height: 7px;
  display: flex;
  align-items: center;
  flex: none;
`;
const ScrollEnd = styled.span`
  width: ${(p) => p.$w}px;
  height: 7px;
  display: flex;
  align-items: flex-start;
  justify-content: center;
  margin-top: -6px;
  flex: none;
`;
const Scroll = styled.div`
  flex: 1;
  height: 7px;
  border-radius: 4px;
  background: #666;
  display: flex;
  justify-content: space-between;
  align-items: center;
  padding: 0 1px;
  &::before,
  &::after {
    content: "";
    width: 5px;
    height: 5px;
    border-radius: 50%;
    background: #7f7f7f;
  }
`;
const StatusBar = styled.footer`
  height: 16px;
  flex: none;
  display: flex;
  align-items: center;
  padding: 0 25px 0 8px;
  background: #363636;
  color: #a2a2a2;
`;
const StatusItem = styled.span`
  display: flex;
  align-items: center;
  gap: 6px;
  width: ${(p) => p.$w}px;
  flex: none;
`;
const Stats = styled.span`
  margin-left: auto;
  color: #a8a8a8;
`;

/* ---------- data ---------- */

const tabNames = ["Layout", "Modeling", "Sculpting", "UV Editing", "Texture Paint", "Shading", "Animation", "Rendering", "Compositing", "Scripting"];

const topMenus = [["File", 25], ["Edit", 26], ["Render", 39], ["Window", 42], ["Help", 38]];

const XTRA = {
  bone: Bone, wrench: WrenchBlue, mods: Mods, data: MeshData, lightData: LightData,
  picture: Picture, pose: Pose, mesh: MeshObj,
};
const meshExtras = ["wrench", "mods", "data"];
const armExtras = ["pose", "pose", "mesh"];

const treeRows = [
  { level: 2, arrow: "down", Icon: Armature, label: "Left hand armature", eye: true },
  { level: 3, arrow: "right", Icon: Pose, label: "Left hand - parent", extras: ["bone", "bone"] },
  { level: 3, Icon: Pose, label: "Pose" },
  { level: 3, arrow: "right", Icon: MeshObj, label: "Left hand", extras: meshExtras, eye: true },
  { level: 2, arrow: "right", Icon: Bulb, label: "Light", extras: ["lightData"], eye: true },
  { level: 2, arrow: "right", Icon: MeshObj, label: "Right foot", extras: meshExtras, eye: true },
  { level: 2, arrow: "down", Icon: Armature, label: "Right hand armature", eye: true },
  { level: 3, arrow: "right", Icon: Pose, label: "Right hand - parent", extras: ["bone", "bone"] },
  { level: 3, Icon: Pose, label: "Pose" },
  { level: 3, arrow: "right", Icon: MeshObj, label: "Right hand", extras: meshExtras, eye: true },
  { level: 1, arrow: "right", Icon: ImageObj, label: "body draft", extras: ["picture"], eye: true },
  { level: 1, arrow: "right", Icon: Armature, label: "Left foot armature", extras: armExtras, eye: true },
  { level: 1, arrow: "right", Icon: Armature, label: "Right foot armature", extras: armExtras, eye: true },
];

const transformGroups = [
  { caption: "Location:", h: 15, rows: ["0 m", "0 m", "0 m"], locks: true },
  { caption: "Rotation:", h: 17, rows: ["0°", "0°", "0°"], locks: true },
  { caption: "Scale:", h: 19, rows: ["1.000", "1.000", "1.000"], locks: true },
  { caption: "Dimensions:", h: 17, rows: ["5.86 m", "0.93 m", "7.64 m"] },
];

const propTabs = [
  ["tool"],
  ["render", "output", "layer", "scene", "world"],
  ["object", "modifier", "particles", "physics", "constraint", "data", "material"],
  ["texture"],
];

const ticks = ["-20", "", "20", "40", "60", "80", "100", "120", "140", "160", "180", "200", "220", "240", "260"];

/* perspective floor grid: origin of the world axes and its two vanishing points, in viewport px */
const ORIGIN = [385, 266];
const VPX = [-1720, -380];
const VPY = [810, -380];
const SU = 0.0238;
const SV = 0.0577;
const project = (u, v) => {
  const a = u * SU;
  const b = v * SV;
  const w = 1 + a + b;
  return [(ORIGIN[0] + a * VPX[0] + b * VPY[0]) / w, (ORIGIN[1] + a * VPX[1] + b * VPY[1]) / w];
};
const gridLines = () => {
  const out = [];
  for (let u = -36; u <= 70; u++) {
    const vMin = (0.04 - 1 - u * SU) / SV;
    const p = project(u, vMin);
    const q = project(u, 500);
    out.push(<line key={`u${u}`} x1={p[0]} y1={p[1]} x2={q[0]} y2={q[1]} />);
  }
  for (let v = -16; v <= 70; v++) {
    const uMin = (0.04 - 1 - v * SV) / SU;
    const p = project(uMin, v);
    const q = project(1500, v);
    out.push(<line key={`v${v}`} x1={p[0]} y1={p[1]} x2={q[0]} y2={q[1]} />);
  }
  return out;
};

const bodyFaces = [
  ["#9e9fa0", "28,65 65,33 160,47 210,65 465,90 465,118 420,150 300,125 205,112 120,92"],
  ["#808080", "28,65 120,92 125,145 45,110"],
  ["#838383", "120,92 175,105 180,153 125,145"],
  ["#858585", "175,105 235,115 240,172 180,153"],
  ["#7e7e7e", "235,115 300,125 310,200 240,172"],
  ["#888888", "300,125 420,150 415,208 310,200"],
  ["#7f7f7f", "420,150 465,118 468,140 572,165 625,205 622,265 415,210"],
  ["#767676", "415,210 625,265 622,315 445,315 420,260"],
  ["#707070", "440,300 622,315 617,358 450,350"],
  ["#737373", "450,350 617,358 615,405 455,405"],
  ["#8a8a8a", "455,405 615,405 638,458 418,465"],
  ["#7c7c7c", "418,465 638,458 655,532 424,540"],
  ["#828282", "424,540 655,532 665,632 435,640"],
  ["#787878", "435,640 665,632 670,720 462,700"],
  ["#7e7e7e", "462,700 670,720 668,760 480,740"],
  ["#888888", "480,740 668,760 663,810 490,800"],
  ["#707070", "490,800 663,810 665,880 500,820"],
  ["#7f7f7f", "500,820 580,850 578,950 528,935"],
  ["#7e7e7e", "588,850 665,880 648,982 598,962 592,925"],
  ["#4e494c", "622,315 663,318 668,395 720,455 720,570 715,700 695,760 695,830 665,905 665,850 670,720 655,532 638,458 615,405"],
  ["#585659", "636,455 668,395 720,455 655,530"],
  ["#4b4648", "545,630 582,800 570,845 555,800"],
  ["#4d484b", "573,850 592,870 580,950 570,945"],
  ["#4d484b", "650,930 665,905 668,945 648,982"],
  ["#949596", "465,92 570,122 572,165 468,140"],
  ["#a3a4a5", "465,92 505,43 605,68 570,122"],
  ["#4b4b4c", "570,122 605,68 610,120 572,165"],
  ["#8f8f8f", "572,165 612,122 665,146 625,205"],
  ["#9e9fa0", "625,205 665,148 740,175 935,245 1015,262 1142,305 1122,348 1000,320 770,250"],
  ["#7c7c7c", "625,205 770,250 765,320 663,318 622,315 625,265"],
  ["#828282", "770,250 850,275 855,330 765,320"],
  ["#868686", "850,275 920,295 920,347 855,332"],
  ["#7e7e7e", "920,295 990,318 985,365 920,347"],
  ["#848484", "990,318 1122,348 1115,392 985,365"],
  ["#3f3c3e", "1122,348 1142,305 1115,392"],
];
const silhouette = "28,65 65,33 160,47 210,65 465,90 505,43 605,68 610,120 740,175 935,245 1015,262 1142,305 1115,392 1000,370 920,347 663,318 668,395 720,455 720,570 715,700 695,760 695,830 665,910 648,982 598,962 592,925 578,950 528,935 490,810 480,740 435,640 418,465 445,410 450,350 420,260 310,200 180,153 135,145 45,110";

const Scene = () => (
  <Scene3D viewBox="0 0 852 574">
    <g stroke="#4a4a4a" strokeWidth="1">{gridLines()}</g>
    <line x1="0" y1="149" x2="852" y2="404" stroke="#8b2e40" strokeWidth="1.2" />
    <line x1="185" y1="575" x2="560" y2="-8" stroke="#6a8f24" strokeWidth="1.2" />
    <g transform="translate(196 92) scale(0.3333)" strokeLinejoin="round">
      <polygon points={silhouette} fill="#7b7b7b" />
      {bodyFaces.map(([fill, pts]) => <polygon key={pts} points={pts} fill={fill} />)}
      <polygon points={silhouette} fill="none" stroke="#f0952c" strokeWidth="4.6" />
    </g>
    <line x1="425" y1="276" x2="470" y2="289.5" stroke="#8b2e40" strokeWidth="1.2" opacity=".85" />
    <line x1="373.4" y1="282" x2="345.8" y2="325" stroke="#6a8f24" strokeWidth="1.2" opacity=".9" />
    <g transform="translate(385 266)">
      <g stroke="#222" strokeWidth="1.1">
        <path d="M-14-4-6-1.6M6 1.6 14 4M4-14l-2 7M-2 7-4 14M-8-10-4-5M4 5 8 10M8-10 4-5M-4 5-8 10" />
      </g>
      <circle r="7.6" fill="none" stroke="#e8e8e8" strokeWidth="1.3" strokeDasharray="3 3" />
      <circle r="7.6" fill="none" stroke="#d0342e" strokeWidth="1.3" strokeDasharray="3 3" strokeDashoffset="3" />
      <circle r="1.8" fill="#f39c2c" />
    </g>
  </Scene3D>
);

const Gizmo = () => (
  <GizmoSvg viewBox="0 0 70 58">
    <circle cx="10" cy="19" r="5.2" fill="#8b2c44" />
    <circle cx="23" cy="43" r="4.6" fill="#7fc00f" />
    <circle cx="33" cy="43" r="5" fill="#34587e" />
    <path d="M33 26 56 33" stroke="#a8333f" strokeWidth="1.4" />
    <path d="M33 26 33 10" stroke="#3f7fd0" strokeWidth="1.4" />
    <path d="M33 26 43 9" stroke="#6d8f29" strokeWidth="1.4" />
    <circle cx="43" cy="9" r="6" fill="#6d8f29" />
    <circle cx="33" cy="10" r="6" fill="#3f7fd0" />
    <circle cx="56" cy="33" r="6" fill="#ef3342" />
    <g fontFamily="'Open Sans', sans-serif" fontSize="8" fontWeight="700" textAnchor="middle" fill="#101418">
      <text x="43" y="12">Y</text>
      <text x="33" y="13">Z</text>
      <text x="56" y="36">X</text>
    </g>
  </GizmoSvg>
);

const TransformSection = ({ group }) => (
  <>
    <Caption $h={group.h}>{group.caption}</Caption>
    <XformRow $wide={!group.locks}>
      <Fields>
        {group.rows.map((value, i) => (
          <FieldRow key={i}>
            <span>{"XYZ"[i]}</span>
            <span>{value}</span>
          </FieldRow>
        ))}
      </Fields>
      {group.locks && (
        <Locks>
          <Lock /><Lock /><Lock />
        </Locks>
      )}
    </XformRow>
  </>
);

const ModButtons = ({ states }) => (
  <Seg $ml={8} $h={14}>
    <SegBtn $w={19} $on={states[0]}><Camera size={11} color="#eef3fb" strokeWidth={1.8} /></SegBtn>
    <SegBtn $w={19} $on={states[1]} $sep><Monitor size={11} color={states[1] ? "#eef3fb" : "#a8a8a8"} strokeWidth={1.6} /></SegBtn>
    <SegBtn $w={19} $on={states[2]} $sep><EditCage on={states[2]} /></SegBtn>
    <SegBtn $w={19} $sep><Cage /></SegBtn>
  </Seg>
);

const ModArrows = () => (
  <Seg $ml={7} $h={14}>
    <SegBtn $w={17}><Tri $up /></SegBtn>
    <SegBtn $w={17} $sep><Tri /></SegBtn>
  </Seg>
);

export default function App() {
  return (
    <Page>
      <GlobalStyle />
      <Frame>
      <Win>
        <TitleBar>
          <Lights>
            <Light $c="#fc5b57" />
            <Light $c="#e5a92c" />
            <Light $c="#28b83f" />
          </Lights>
          <DocIcon />
          human.blend
        </TitleBar>

        <TopBar>
          <BlenderLogo />
          <TopMenu $w={7} />
          {topMenus.map(([name, w]) => <TopMenu key={name} $w={w}>{name}</TopMenu>)}
          <Tabs>
            {tabNames.map((t, i) => <WorkTab key={t} $on={i === 0}>{t}</WorkTab>)}
            <AddTab><Plus size={11} /></AddTab>
          </Tabs>
          <SceneBox $ml="auto">
            <SceneDrop><SceneIcon /><Chev /></SceneDrop>
            <SceneField>Scene</SceneField>
            <SceneBtn $w={14} $light><Copy size={10} color="#d0d0d0" /></SceneBtn>
            <SceneBtn $w={18}><X size={9} color="#777" /></SceneBtn>
          </SceneBox>
          <SceneBox $ml="3px">
            <SceneDrop><LayerIcon /><Chev /></SceneDrop>
            <SceneField>View Layer</SceneField>
            <SceneBtn $w={14} $light><Copy size={10} color="#d0d0d0" /></SceneBtn>
            <SceneBtn $w={17}><X size={9} color="#777" /></SceneBtn>
          </SceneBox>
        </TopBar>

        <Work>
          <LeftCol>
            <Viewport>
              <Scene />
              <Bar>
                <Drop $w={23}><Transform3D /><Chev /></Drop>
                <CursorTool><Arrow /></CursorTool>
                <Seg $ml={11}>
                  {[0, 1, 2, 3, 4].map((k) => (
                    <SegBtn key={k} $w={14.6} $on={k === 0} $sep={k > 0}><SelectMode kind={k} /></SegBtn>
                  ))}
                </Seg>
                <Drop $ml={188} $w={60} $left><Transform3D />Global<Chev /></Drop>
                <Drop $ml={6} $w={23}><Link /><Chev /></Drop>
                <Seg $ml={6}>
                  <SegBtn $w={14}><Magnet /></SegBtn>
                  <SegBtn $w={25} $bg="#2d2d2d"><SnapIcon /><Chev /></SegBtn>
                </Seg>
                <Seg $ml={5}>
                  <SegBtn $w={14}><PropEdit /></SegBtn>
                  <SegBtn $w={24} $bg="#353535"><Falloff /><Chev /></SegBtn>
                </Seg>
                <Drop $end $w={47}>Options <Chev /></Drop>
              </Bar>

              <ModeRow>
                <ModeDrop $w={82}><ObjectSquare />Object Mode<Chev /></ModeDrop>
                <ModeItem $w={29} $ml={6}>View</ModeItem>
                <ModeItem $w={34} $ml={2}>Select</ModeItem>
                <ModeItem $w={25} $ml={2}>Add</ModeItem>
                <ModeItem $w={35} $ml={1}>Object</ModeItem>
                <RightTools>
                  <Seg $h={14}><SegBtn $w={23} $bg="#2b2b2b"><EyeCursor /><Chev /></SegBtn></Seg>
                  <Seg $ml={5} $h={14}>
                    <SegBtn $on><GizmoToggle /></SegBtn>
                    <SegBtn $w={14} $bg="#2d2d2d"><Chev /></SegBtn>
                  </Seg>
                  <Seg $ml={6} $h={14}>
                    <SegBtn $on><OverlayToggle /></SegBtn>
                    <SegBtn $w={14} $bg="#2d2d2d"><Chev /></SegBtn>
                  </Seg>
                  <Seg $ml={6} $h={14}><SegBtn $w={14}><XRay /></SegBtn></Seg>
                  <Seg $ml={5} $h={14}>
                    {[0, 1, 2, 3].map((k) => (
                      <SegBtn key={k} $w={14.75} $on={k === 1}><Shade kind={k} /></SegBtn>
                    ))}
                    <SegBtn $w={14} $bg="#2d2d2d"><Chev /></SegBtn>
                  </Seg>
                </RightTools>
              </ModeRow>

              <ViewBody>
                <Shelf>
                  <ShelfGroup>
                    <ShelfBtn $on $more><ToolSelect /></ShelfBtn>
                    <ShelfBtn><ToolCursor /></ShelfBtn>
                  </ShelfGroup>
                  <ShelfGroup>
                    <ShelfBtn><ToolMove /></ShelfBtn>
                    <ShelfBtn><ToolRotate /></ShelfBtn>
                    <ShelfBtn $more><ToolScale /></ShelfBtn>
                    <ShelfBtn><ToolTransform /></ShelfBtn>
                  </ShelfGroup>
                  <ShelfGroup>
                    <ShelfBtn $more><ToolAnnotate /></ShelfBtn>
                    <ShelfBtn><ToolMeasure /></ShelfBtn>
                  </ShelfGroup>
                </Shelf>
                <Hud>
                  User Perspective
                  <br />
                  (1) human | Body
                </Hud>
                <NavCol>
                  <Gizmo />
                  <NavBtn><ZoomIn size={13} color="#d0d0d0" strokeWidth={1.8} /></NavBtn>
                  <NavBtn><Hand size={13} color="#d0d0d0" strokeWidth={1.8} /></NavBtn>
                  <NavBtn><FilmCamera /></NavBtn>
                  <NavBtn>
                    <Ico c="#c8c8c8" w={0.9}>
                      <path d="M3 3h8l2 9H1zM2 7.5h10M1.6 10h10.8M6 3 5 12M8 3l1 9" />
                    </Ico>
                  </NavBtn>
                </NavCol>
                <Side>
                  <SidePanels>
                    <PanelHead><Tri />Transform<Grip /></PanelHead>
                    <PanelBody>
                      {transformGroups.map((g) => (
                        <React.Fragment key={g.caption}>
                          <TransformSection group={g} />
                          {g.caption === "Rotation:" && <SideSelect>XYZ Euler<Chev /></SideSelect>}
                        </React.Fragment>
                      ))}
                    </PanelBody>
                    <PanelHead $mt={1}><Tri />Properties<Grip /></PanelHead>
                  </SidePanels>
                  <SideTabs>
                    <SideTab $on $h={26}><span>Item</span></SideTab>
                    <SideTab $h={27}><span>Tool</span></SideTab>
                    <SideTab $h={30}><span>View</span></SideTab>
                    <SideTab $h={32}><span>Create</span></SideTab>
                  </SideTabs>
                </Side>
              </ViewBody>
            </Viewport>

            <Timeline>
              <Bar $h={21}>
                <Drop $w={22} $bg="#2b2b2b"><TimelineIcon /><Chev /></Drop>
                <Drop $ml={6} $w={52} $left>Playback<Chev /></Drop>
                <Drop $ml={2} $w={44} $left>Keying<Chev /></Drop>
                <TextBtn $ml={6} $w={19}>View</TextBtn>
                <TextBtn $ml={12} $w={28}>Marker</TextBtn>
                <Seg $ml={165}><SegBtn $w={13}><Ico c="#d8d8d8" s={10}><circle cx="7" cy="7" r="3.6" fill="currentColor" stroke="none" /></Ico></SegBtn></Seg>
                <Seg $ml={6}>
                  {["first", "prevKey", "back", "play", "nextKey", "last"].map((k) => (
                    <SegBtn key={k} $w={15.2}><Transport kind={k} /></SegBtn>
                  ))}
                </Seg>
                <NumField $ml={155} $w={57} $center>1</NumField>
                <ClockBtn><Timer size={12} color="#cfcfcf" strokeWidth={1.4} /></ClockBtn>
                <NumField $ml={1} $w={68} $r="0" $sep><span>Start</span><span>1</span></NumField>
                <NumField $w={64} $r="0 3px 3px 0" $pl={12} $pr={10}><span>End</span><span>250</span></NumField>
              </Bar>
              <Ruler>
                {ticks.map((t, i) => <RulerTick key={i}>{t}</RulerTick>)}
                <FrameTag>1</FrameTag>
              </Ruler>
              <ScrollRow>
                <ScrollEnd $w={3}><ChevronRight size={7} color="#9a9a9a" /></ScrollEnd>
                <Scroll />
                <ScrollEnd $w={6}><ChevronLeft size={7} color="#9a9a9a" /></ScrollEnd>
              </ScrollRow>
            </Timeline>
          </LeftCol>

          <RightCol>
            <Outliner>
              <Bar>
                <Drop $ml={1} $w={23}><OutlinerIcon /><Chev /></Drop>
                <Drop $ml={5} $w={23}><LayerIcon /><Chev /></Drop>
                <SearchBox><Search size={11} color="#c8c8c8" /></SearchBox>
                <Drop $ml={46} $w={23}><Funnel size={11} color="#d0d0d0" /><Chev /></Drop>
                <Seg $ml={6} $h={14}>
                  <SegBtn $w={14}>
                    <Ico c="#d0d0d0" w={1} s={12}>
                      <path d="M2 3.5h5M2 3.5v9h9V8M4 6.5h5M4 9.5h5" />
                      <path d="M11 1v5M8.5 3.5h5" strokeWidth="1.4" />
                    </Ico>
                  </SegBtn>
                </Seg>
              </Bar>
              <Tree>
                {treeRows.map((row, i) => (
                  <TreeRow key={i} $level={row.level} $odd={i % 2 === 1}>
                    <Expander $kind={row.arrow} />
                    <row.Icon />
                    <RowLabel>{row.label}</RowLabel>
                    {row.extras && (
                      <Extras>
                        {row.extras.map((e, j) => {
                          const X2 = XTRA[e];
                          return <X2 key={j} />;
                        })}
                      </Extras>
                    )}
                    {row.eye && <EyeSlot><Eye size={12} color="#dcdcdc" strokeWidth={1.8} /></EyeSlot>}
                  </TreeRow>
                ))}
                <TreeLine $x={23} $y={0} $h={192} />
                <TreeLine $x={38} $y={0} $h={100} />
                <TreeLine $x={54} $y={22} $h={32} />
                <TreeLine $x={54} $y={115} $h={32} />
              </Tree>
            </Outliner>

            <Properties>
              <Bar $h={22} $pl={8}>
                <Drop $w={23} $bg="#2d2d2d">
                  <Ico c="#cfcfcf" w={0}>
                    <rect x="1" y="2.5" width="12" height="3.5" rx="1" fill="currentColor" stroke="none" />
                    <rect x="1" y="8" width="12" height="3.5" rx="1" fill="#8d8d8d" stroke="none" />
                  </Ico>
                  <Chev />
                </Drop>
                <ObjectGap><ObjectSquare /></ObjectGap>
                <TextBtn $ml={6}>Body</TextBtn>
                <PinSlot><Pin size={11} color="#8d8d8d" strokeWidth={1.4} /></PinSlot>
              </Bar>
              <PropMain>
                <PropTabs>
                  {propTabs.map((group, g) => (
                    <PropTabGroup key={g}>
                      {group.map((name) => {
                        const Draw = TabDraw[name];
                        return <PropTab key={name} $on={name === "modifier"}><Draw /></PropTab>;
                      })}
                    </PropTabGroup>
                  ))}
                </PropTabs>
                <PropBody>
                  <WideSelect>Add Modifier<Chev /></WideSelect>
                  <ModCard $mt={6}>
                    <ModHead>
                      <ModTri />
                      <ModIconSlot><Mirror /></ModIconSlot>
                      <ModName>Mirro</ModName>
                      <ModButtons states={[true, true, true]} />
                      <ModArrows />
                      <ModX><X size={11} color="#c4c4c4" /></ModX>
                    </ModHead>
                  </ModCard>
                  <ModCard $mt={6}>
                    <ModHead>
                      <ModTri $open />
                      <ModIconSlot><Subd /></ModIconSlot>
                      <ModName>Subd</ModName>
                      <ModButtons states={[true, false, false]} />
                      <ModArrows />
                      <ModX><X size={11} color="#c4c4c4" /></ModX>
                    </ModHead>
                    <ModBody>
                      <TwoCol>
                        <ActionBtn>Apply</ActionBtn>
                        <ActionBtn>Copy</ActionBtn>
                      </TwoCol>
                      <Switch>
                        <SwitchOpt $on>Catmull-Clark</SwitchOpt>
                        <SwitchOpt>Simple</SwitchOpt>
                      </Switch>
                      <TwoCol>
                        <div>
                          <OptHead>Subdivisions:</OptHead>
                          <SubFields $mb={3}>
                            <SubField><span>Render</span><span>2</span></SubField>
                            <SubField><span>Viewport</span><span>1</span></SubField>
                          </SubFields>
                          <SubFields>
                            <SubField><span>Quality</span><span>3</span></SubField>
                          </SubFields>
                        </div>
                        <div>
                          <OptHead>Options:</OptHead>
                          <OptSelect>Smooth, keep corners<Chev /></OptSelect>
                          <CheckRow><CheckBox />Optimal Display</CheckRow>
                          <CheckRow>
                            <CheckBox $on>
                              <Ico c="#fff" s={9} w={2}><path d="M3 7.5 6 10.5 11 3.5" /></Ico>
                            </CheckBox>
                            Use Creases
                          </CheckRow>
                        </div>
                      </TwoCol>
                    </ModBody>
                  </ModCard>
                </PropBody>
              </PropMain>
            </Properties>
          </RightCol>
        </Work>

        <StatusBar>
          <StatusItem $w={52}><Mouse side="left" />Select</StatusItem>
          <StatusItem $w={130}><Mouse side="right" />Box Select</StatusItem>
          <StatusItem $w={182}><Mouse side="middle" />Dolly View</StatusItem>
          <StatusItem $w={80}><Mouse side="right" />Lasso Select</StatusItem>
          <Stats>human | Body | Verts:2,394 | Faces:2,418 | Tris:4,848 | Objects:1/12 | Mem: 41.6 MiB | v2.81.16</Stats>
        </StatusBar>
      </Win>
      </Frame>
    </Page>
  );
}
